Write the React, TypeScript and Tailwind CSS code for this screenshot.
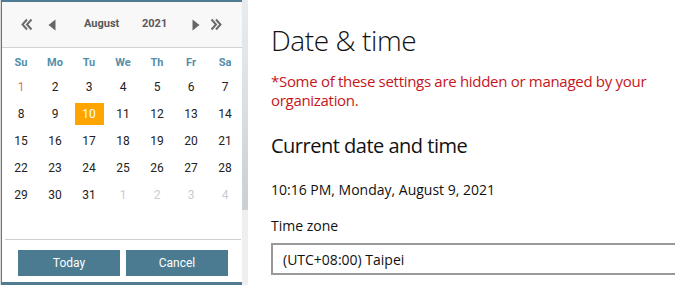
import React from "react";

const weekdays = ["Su", "Mo", "Tu", "We", "Th", "Fr", "Sa"];

type Day = { n: number; muted?: boolean; tone?: "holiday" | "selected" };

const weeks: Day[][] = [
  [{ n: 1, tone: "holiday" }, { n: 2 }, { n: 3 }, { n: 4 }, { n: 5 }, { n: 6 }, { n: 7 }],
  [{ n: 8 }, { n: 9 }, { n: 10, tone: "selected" }, { n: 11 }, { n: 12 }, { n: 13 }, { n: 14 }],
  [{ n: 15 }, { n: 16 }, { n: 17 }, { n: 18 }, { n: 19 }, { n: 20 }, { n: 21 }],
  [{ n: 22 }, { n: 23 }, { n: 24 }, { n: 25 }, { n: 26 }, { n: 27 }, { n: 28 }],
  [{ n: 29 }, { n: 30 }, { n: 31 }, { n: 1, muted: true }, { n: 2, muted: true }, { n: 3, muted: true }, { n: 4, muted: true }],
];

function DoubleArrow({ flip }: { flip?: boolean }) {
  return (
    <svg width="12" height="13" viewBox="0 0 12 13" className={flip ? "-scale-x-100" : ""}>
      <path d="M6 1.5 L1.5 6.5 L6 11.5" fill="none" stroke="#6b6b6b" strokeWidth="2" />
      <path d="M10.5 1.5 L6 6.5 L10.5 11.5" fill="none" stroke="#6b6b6b" strokeWidth="2" />
    </svg>
  );
}

function Arrow({ flip }: { flip?: boolean }) {
  return (
    <svg width="8" height="12" viewBox="0 0 8 12" className={flip ? "-scale-x-100" : ""}>
      <path d="M7.5 0.5 L0.5 6 L7.5 11.5 Z" fill="#666666" />
    </svg>
  );
}

function Calendar() {
  return (
    <div className="flex h-[285px] w-[240px] shrink-0 bg-[#d9d9d9] pl-px">
      <div className="flex flex-1 flex-col border-l border-t-2 border-b-[3px] border-[#4f7c92] bg-white font-['Roboto',sans-serif]">
        <div className="flex h-[46px] items-center border-b border-[#d2d2d2] bg-[#f8f8f8] text-[11px] font-bold text-[#5a5a5a]">
          <span className="ml-[19px]"><DoubleArrow /></span>
          <span className="ml-[15px]"><Arrow /></span>
          <span className="ml-[28px] w-[40px]">August</span>
          <span className="ml-[18px]">2021</span>
          <span className="ml-[25px]"><Arrow flip /></span>
          <span className="ml-[10px]"><DoubleArrow flip /></span>
        </div>

        <div className="px-[2px] pt-[6px]">
          <div className="grid h-[19px] grid-cols-7 items-center text-center text-[11px] font-bold text-[#548ea9]">
            {weekdays.map((d) => (
              <span key={d}>{d}</span>
            ))}
          </div>
          {weeks.map((w, i) => (
            <div key={i} className="grid h-[27px] grid-cols-7 items-center text-center text-[12px] text-[#222]">
              {w.map((d, j) => (
                <div key={j} className="flex justify-center">
                  <span
                    className={
                      d.tone === "selected"
                        ? "flex h-[22px] w-[29px] items-center justify-center bg-[#ffa500] text-white"
                        : d.tone === "holiday"
                          ? "text-[#dc7358]"
                          : d.muted
                            ? "text-[#c9cdd0]"
                            : ""
                    }
                  >
                    {d.n}
                  </span>
                </div>
              ))}
            </div>
          ))}
        </div>

        <div className="mx-[3px] mt-auto flex gap-[6px] border-t border-[#d0d0d0] px-[13px] pb-[6px] pt-[10px]">
          <button className="h-[26px] w-[102px] bg-[#4a7b91] text-[12px] text-white">Today</button>
          <button className="h-[26px] w-[102px] bg-[#4a7b91] text-[12px] text-white">Cancel</button>
        </div>
      </div>
    </div>
  );
}

export default function App() {
  return (
    <div className="flex h-[285px] w-[675px] overflow-hidden bg-white">
      <Calendar />
      <div className="ml-[2px] flex w-[6px] shrink-0 flex-col bg-[#efefef]">
        <div className="h-[210px] bg-gradient-to-b from-[#e9ecee] via-[#d8e0e5] to-[#c9cfd2]" />
      </div>
      <div className="flex-1 pl-[23px] pt-[21px] font-['Open_Sans',sans-serif] text-[#111]">
        <h1 className="text-[28px] font-light leading-[38px] tracking-[-0.4px]">Date &amp; time</h1>
        <p className="mt-[13px] w-[390px] text-[15px] leading-[19px] tracking-[-0.3px] text-[#c4161c]">
          *Some of these settings are hidden or managed by your organization.
        </p>
        <h2 className="mt-[22px] text-[20px] leading-[28px] tracking-[-0.5px]">Current date and time</h2>
        <p className="mt-[20px] text-[14px] leading-[20px]">10:16 PM, Monday, August 9, 2021</p>
        <p className="mt-[16px] text-[14px] leading-[20px]">Time zone</p>
        <div className="mt-[7px] flex h-[32px] w-[420px] items-center border-2 border-[#999] pl-[10px] text-[14px]">
          (UTC+08:00) Taipei
        </div>
      </div>
    </div>
  );
}
